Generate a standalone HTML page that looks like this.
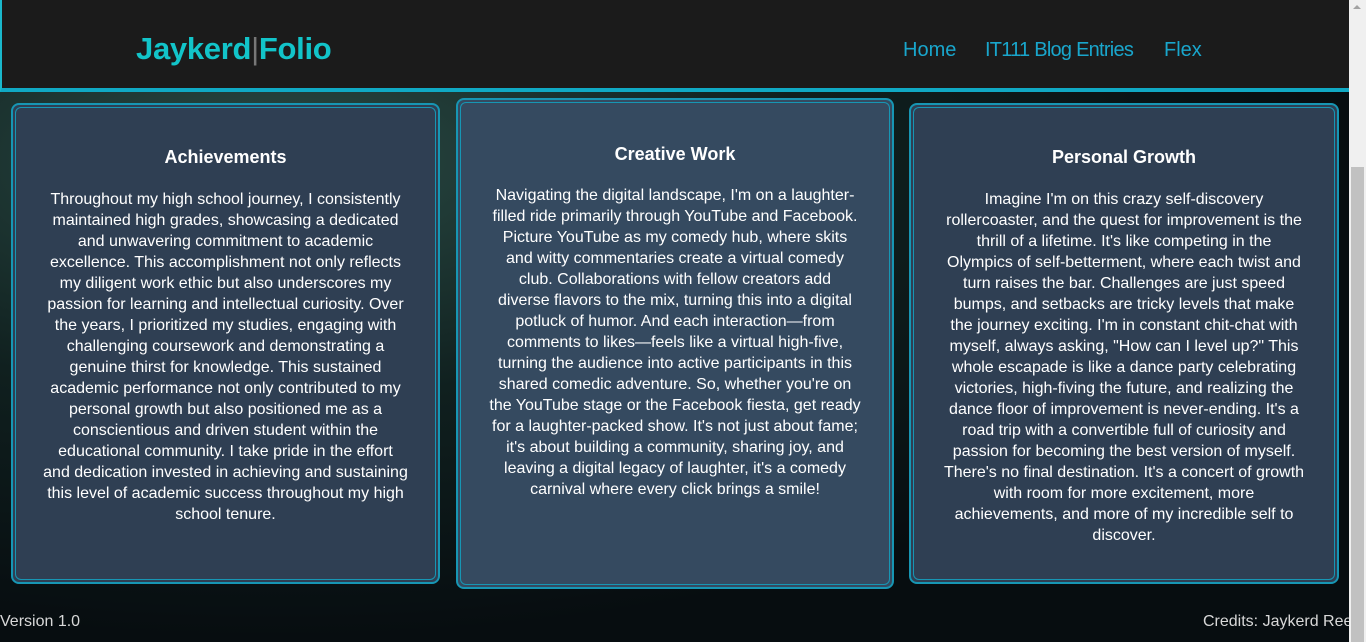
<!DOCTYPE html>
<html><head><meta charset="utf-8"><style>
*{margin:0;padding:0;box-sizing:border-box}
html,body{width:1366px;height:642px;overflow:hidden}
body{font-family:"Liberation Sans",sans-serif;color:#fff;position:relative;
background:radial-gradient(ellipse at 20% 25%,#2a4a44 0%,#10201f 35%,#070d10 70%),#070d10;}
.sb{position:absolute;right:0;top:0;width:17px;height:642px;background:#f0f0f0}
.sb .th{position:absolute;left:2px;top:167px;width:13px;height:475px;background:#c1c1c1}
.sb .ar{position:absolute;left:4px;top:5px;width:0;height:0;border-left:4px solid transparent;border-right:4px solid transparent;border-bottom:4px solid #a3a3a3}
header{position:absolute;left:0;top:0;width:1349px;height:92px;background:#1b1b1b;border-left:2px solid #1ab8cc;border-bottom:4px solid #10a9c4}
.logo{position:absolute;left:134px;top:31px;font-size:31px;font-weight:bold;color:#12c4c9;letter-spacing:-0.3px}
.logo span{color:#777;font-weight:normal}
nav a{position:absolute;top:39px;font-size:20px;color:#19a6cc;text-decoration:none}
.card{position:absolute;background:#2f3f53;border:2px solid #1796b4;border-radius:8px;text-align:center}
.card::before{content:"";position:absolute;inset:2px;border:1.5px solid #1796b4;border-radius:6px}
.card h2{font-size:18px;font-weight:bold;margin-top:42px}
.card p{font-size:16px;line-height:21px;margin-top:21px;white-space:nowrap}
.foot{position:absolute;top:613px;font-size:16px;color:#d8d8d8}
</style></head><body>
<header><div class="logo">Jaykerd<span>|</span>Folio</div>
<nav><a style="left:901px">Home</a><a style="left:983px;letter-spacing:-0.75px">IT111 Blog Entries</a><a style="left:1162px">Flex</a></nav></header>
<div class="card" style="left:11px;top:103px;width:429px;height:481px"><h2>Achievements</h2><p>Throughout my high school journey, I consistently<br>maintained high grades, showcasing a dedicated<br>and unwavering commitment to academic<br>excellence. This accomplishment not only reflects<br>my diligent work ethic but also underscores my<br>passion for learning and intellectual curiosity. Over<br>the years, I prioritized my studies, engaging with<br>challenging coursework and demonstrating a<br>genuine thirst for knowledge. This sustained<br>academic performance not only contributed to my<br>personal growth but also positioned me as a<br>conscientious and driven student within the<br>educational community. I take pride in the effort<br>and dedication invested in achieving and sustaining<br>this level of academic success throughout my high<br>school tenure.</p></div>
<div class="card" style="left:456px;top:98px;width:438px;height:491px;background:#354a60"><h2 style="margin-top:44px">Creative Work</h2><p style="margin-top:20px">Navigating the digital landscape, I'm on a laughter-<br>filled ride primarily through YouTube and Facebook.<br>Picture YouTube as my comedy hub, where skits<br>and witty commentaries create a virtual comedy<br>club. Collaborations with fellow creators add<br>diverse flavors to the mix, turning this into a digital<br>potluck of humor. And each interaction—from<br>comments to likes—feels like a virtual high-five,<br>turning the audience into active participants in this<br>shared comedic adventure. So, whether you're on<br>the YouTube stage or the Facebook fiesta, get ready<br>for a laughter-packed show. It's not just about fame;<br>it's about building a community, sharing joy, and<br>leaving a digital legacy of laughter, it's a comedy<br>carnival where every click brings a smile!</p></div>
<div class="card" style="left:909px;top:103px;width:430px;height:481px"><h2>Personal Growth</h2><p>Imagine I'm on this crazy self-discovery<br>rollercoaster, and the quest for improvement is the<br>thrill of a lifetime. It's like competing in the<br>Olympics of self-betterment, where each twist and<br>turn raises the bar. Challenges are just speed<br>bumps, and setbacks are tricky levels that make<br>the journey exciting. I'm in constant chit-chat with<br>myself, always asking, "How can I level up?" This<br>whole escapade is like a dance party celebrating<br>victories, high-fiving the future, and realizing the<br>dance floor of improvement is never-ending. It's a<br>road trip with a convertible full of curiosity and<br>passion for becoming the best version of myself.<br>There's no final destination. It's a concert of growth<br>with room for more excitement, more<br>achievements, and more of my incredible self to<br>discover.</p></div>
<div class="foot" style="left:0">Version 1.0</div>
<div class="foot" style="left:1203px;white-space:nowrap">Credits: Jaykerd Reeves</div>
<div class="sb"><div class="ar"></div><div class="th"></div></div>
</body></html>
